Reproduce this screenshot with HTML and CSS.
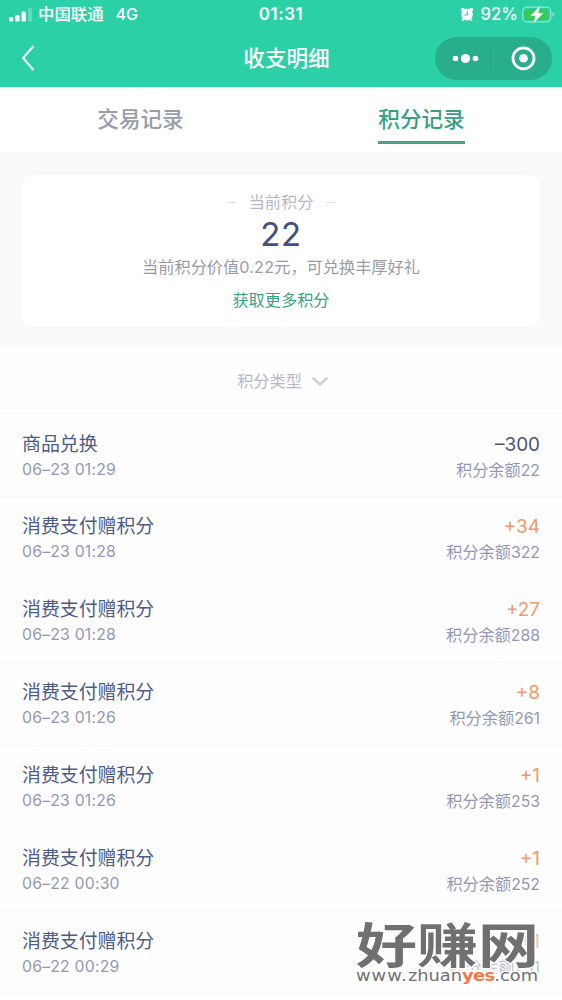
FILE: index.html
```html
<!DOCTYPE html>
<html lang="zh-CN">
<head>
<meta charset="utf-8">
<title>收支明细</title>
<link rel="stylesheet" href="styles.css">
</head>
<body>
<div class="app">
  <header class="header">
    <div class="status">
      <div class="carrier">
        <svg class="signal" width="24" height="14" viewBox="0 0 24 14"><g fill="#fff"><rect x="0" y="9" width="4.2" height="4.5" rx="1.3"/><rect x="6.3" y="7" width="4.2" height="6.5" rx="1.3"/><rect x="12.6" y="3.5" width="4.2" height="10" rx="1.3"/><rect x="19" y="0" width="4.2" height="13.5" rx="1.3" opacity=".25"/></g></svg>
        <span class="operator">中国联通</span><span class="network">4G</span>
      </div>
      <div class="clock">01:31</div>
      <div class="power">
        <svg width="14" height="15" viewBox="0 0 14 15"><g fill="#fff"><circle cx="7" cy="7.6" r="5.8"/><circle cx="2.8" cy="2.7" r="2"/><circle cx="11.2" cy="2.7" r="2"/><path d="M2.8 11.5 1.5 14h2l1-1.5zM11.2 11.5l1.3 2.5h-2l-1-1.5z"/></g><path d="M7.3 4.2V8H4.2" fill="none" stroke="#2bd0a6" stroke-width="1.2"/></svg>
        <span class="percent">92%</span>
        <svg class="battery" width="33" height="17" viewBox="0 0 33 17"><rect x=".7" y="1.2" width="28" height="14.6" rx="4" fill="none" stroke="#8fe8c9" stroke-width="1.2"/><rect x="2.5" y="3" width="23.5" height="11" rx="2.2" fill="#36ca57"/><path d="M30.5 6v5q1.8-.7 1.8-2.5T30.500 6z" fill="#8fe8c9"/><path d="M17.6.8 9 9.600h4.900L12 16.300l8.800-8.900h-4.900z" fill="#fff" stroke="#fff" stroke-width=".6"/></svg>
      </div>
    </div>
    <div class="nav">
      <svg class="back" width="14" height="28" viewBox="0 0 14 28"><path d="M12.500 2 2 14l10.500 12" fill="none" stroke="#fff" stroke-width="2"/></svg>
      <h1 class="title">收支明细</h1>
      <div class="capsule">
        <svg width="117" height="43" viewBox="0 0 117 43"><g fill="#fff"><circle cx="20.500" cy="21.500" r="2.800"/><circle cx="30.500" cy="21.500" r="4.600"/><circle cx="40.500" cy="21.500" r="2.800"/><circle cx="88.500" cy="21.300" r="4.300"/></g><circle cx="88.500" cy="21.300" r="10.500" fill="none" stroke="#fff" stroke-width="2.800"/><path d="M58.500 8v26" stroke="#34b795"/></svg>
      </div>
    </div>
  </header>
  <nav class="tabs">
    <div class="tab"><span class="tab-label">交易记录</span></div>
    <div class="tab"><span class="tab-label active">积分记录</span></div>
  </nav>
  <section class="summary">
    <div class="card">
      <div class="card-title"><i class="dash"></i>当前积分<i class="dash"></i></div>
      <div class="points">22</div>
      <div class="worth">当前积分价值<span class="worth-num">0.22</span>元，可兑换丰厚好礼</div>
      <div class="more">获取更多积分</div>
    </div>
  </section>
  <div class="filter">积分类型<svg width="18" height="11" viewBox="0 0 18 11"><path d="M1.500 1.500 9 8.500l7.500-7" fill="none" stroke="#d2d2d8" stroke-width="2.800"/></svg></div>
  <main class="list">
    <div class="row"><div><div class="name">商品兑换</div><div class="date">06–23 01:29</div></div><div class="right"><div class="amount minus">–300</div><div class="balance">积分余额<span>22</span></div></div></div>
    <div class="row"><div><div class="name">消费支付赠积分</div><div class="date">06–23 01:28</div></div><div class="right"><div class="amount">+34</div><div class="balance">积分余额<span>322</span></div></div></div>
    <div class="row"><div><div class="name">消费支付赠积分</div><div class="date">06–23 01:28</div></div><div class="right"><div class="amount">+27</div><div class="balance">积分余额<span>288</span></div></div></div>
    <div class="row"><div><div class="name">消费支付赠积分</div><div class="date">06–23 01:26</div></div><div class="right"><div class="amount">+8</div><div class="balance">积分余额<span>261</span></div></div></div>
    <div class="row"><div><div class="name">消费支付赠积分</div><div class="date">06–23 01:26</div></div><div class="right"><div class="amount">+1</div><div class="balance">积分余额<span>253</span></div></div></div>
    <div class="row"><div><div class="name">消费支付赠积分</div><div class="date">06–22 00:30</div></div><div class="right"><div class="amount">+1</div><div class="balance">积分余额<span>252</span></div></div></div>
    <div class="row last"><div><div class="name">消费支付赠积分</div><div class="date">06–22 00:29</div></div><div class="right"><div class="amount">+1</div><div class="balance">积分余额<span>251</span></div></div></div>
  </main>
  <div class="watermark"><div class="brand">好赚网</div><div class="site"><span class="wide">www.</span>zhuan<b>yes</b>.com</div></div>
</div>
</body>
</html>
```
FILE: styles.css
```css
* { box-sizing: border-box; }
body { margin: 0; background: #fff; }
.app {
  position: relative;
  width: 562px;
  height: 1000px;
  overflow: hidden;
  background: #fefefe;
  font-family: Inter, "Noto Sans CJK SC", sans-serif;
  color: #9498b3;
}
.header { height: 87px; background: #2bd0a6; color: #fff; }
.status {
  height: 29px;
  display: grid;
  grid-template-columns: 1fr auto 1fr;
  align-items: center;
  padding: 0 9px;
  line-height: 29px;
  font-size: 16.4px;
}
.carrier, .power { display: flex; align-items: center; }
.signal { margin-right: 5px; }
.operator { font-weight: 500; }
.network { margin-left: 12px; font-weight: 500; font-size: 16px; }
.clock { font-weight: 600; font-size: 17px; letter-spacing: .5px; }
.power { justify-content: flex-end; margin-right: -2px; }
.percent { margin: 0 4px 0 6px; font-weight: 500; font-size: 16.8px; }
.nav {
  height: 58px;
  display: grid;
  grid-template-columns: 1fr auto 1fr;
  align-items: center;
  padding: 0 10px 0 21px;
}
.title { margin: 0; font-size: 21.6px; font-weight: 500; line-height: 56px; }
.capsule { justify-self: end; width: 117px; height: 43px; border-radius: 22px; background: #29ae8c; }
.capsule svg, .back { display: block; }
.tabs { height: 65px; display: flex; background: #fff; }
.tab { flex: 1; display: flex; justify-content: center; align-items: flex-start; padding-top: 13px; }
.tab-label { height: 44px; line-height: 38px; font-size: 21.6px; font-weight: 500; color: #9a9caa; }
.tab-label.active { color: #369f85; border-bottom: 3px solid #48a18b; }
.summary { height: 197px; padding: 23px 22px 0; background: #fafafa; }
.card {
  height: 152px;
  border-radius: 10px;
  background: #fff;
  box-shadow: 0 0 14px rgba(0, 0, 0, .025);
  text-align: center;
  padding-top: 15px;
  font-size: 16.2px;
}
.card-title { display: flex; justify-content: center; align-items: center; gap: 13px; height: 24px; line-height: 24px; color: #b5b7c8; }
.dash { width: 9px; height: 1px; background: #dcdde5; }
.points { height: 40px; line-height: 40px; font-size: 33px; letter-spacing: .5px; color: #42507f; }
.worth { height: 27px; line-height: 27px; color: #999ba5; }
.worth-num { letter-spacing: .2px; }
.more { height: 38px; line-height: 38px; color: #38a286; }
.filter {
  height: 65px;
  display: flex;
  justify-content: center;
  align-items: center;
  gap: 9px;
  padding-left: 4px;
  line-height: 24px;
  border-bottom: 1px solid #f5f5f6;
  font-size: 16.2px;
  color: #b5b7c8;
}
.row {
  height: 82.9px;
  display: flex;
  justify-content: space-between;
  padding: 15.6px 22px 0;
  border-bottom: 1px solid #f5f5f6;
}
.right { text-align: right; }
.name, .amount { height: 28px; line-height: 30px; font-size: 18.9px; color: #4d5b87; }
.amount { color: #f09a68; }
.amount.minus { color: #4d5278; }
.date, .balance { height: 24px; line-height: 24px; font-size: 16.2px; }
.date { font-size: 15.8px; letter-spacing: .2px; }
.balance span { font-size: 15.8px; }
.last .amount, .last .balance { opacity: .6; }
/* Site stamp laid over the last row */
.watermark {
  position: absolute;
  left: 356px;
  top: 915px;
  width: 186px;
  color: #707070;
  paint-order: stroke fill;
  -webkit-text-stroke: 3px #fefefe;
}
.brand {
  height: 54px;
  line-height: 54px;
  font-family: "Noto Sans CJK SC", sans-serif;
  font-size: 61px;
  font-weight: 700;
  white-space: nowrap;
  transform: scaleY(.79);
}
.site {
  width: 161px;
  height: 15px;
  line-height: 15px;
  font-family: "DejaVu Sans", sans-serif;
  font-size: 15.5px;
  white-space: nowrap;
  transform: scaleX(1.15);
  transform-origin: left;
}
.site .wide { letter-spacing: .9px; }
.site b { color: #f57549; letter-spacing: -.6px; }
```
